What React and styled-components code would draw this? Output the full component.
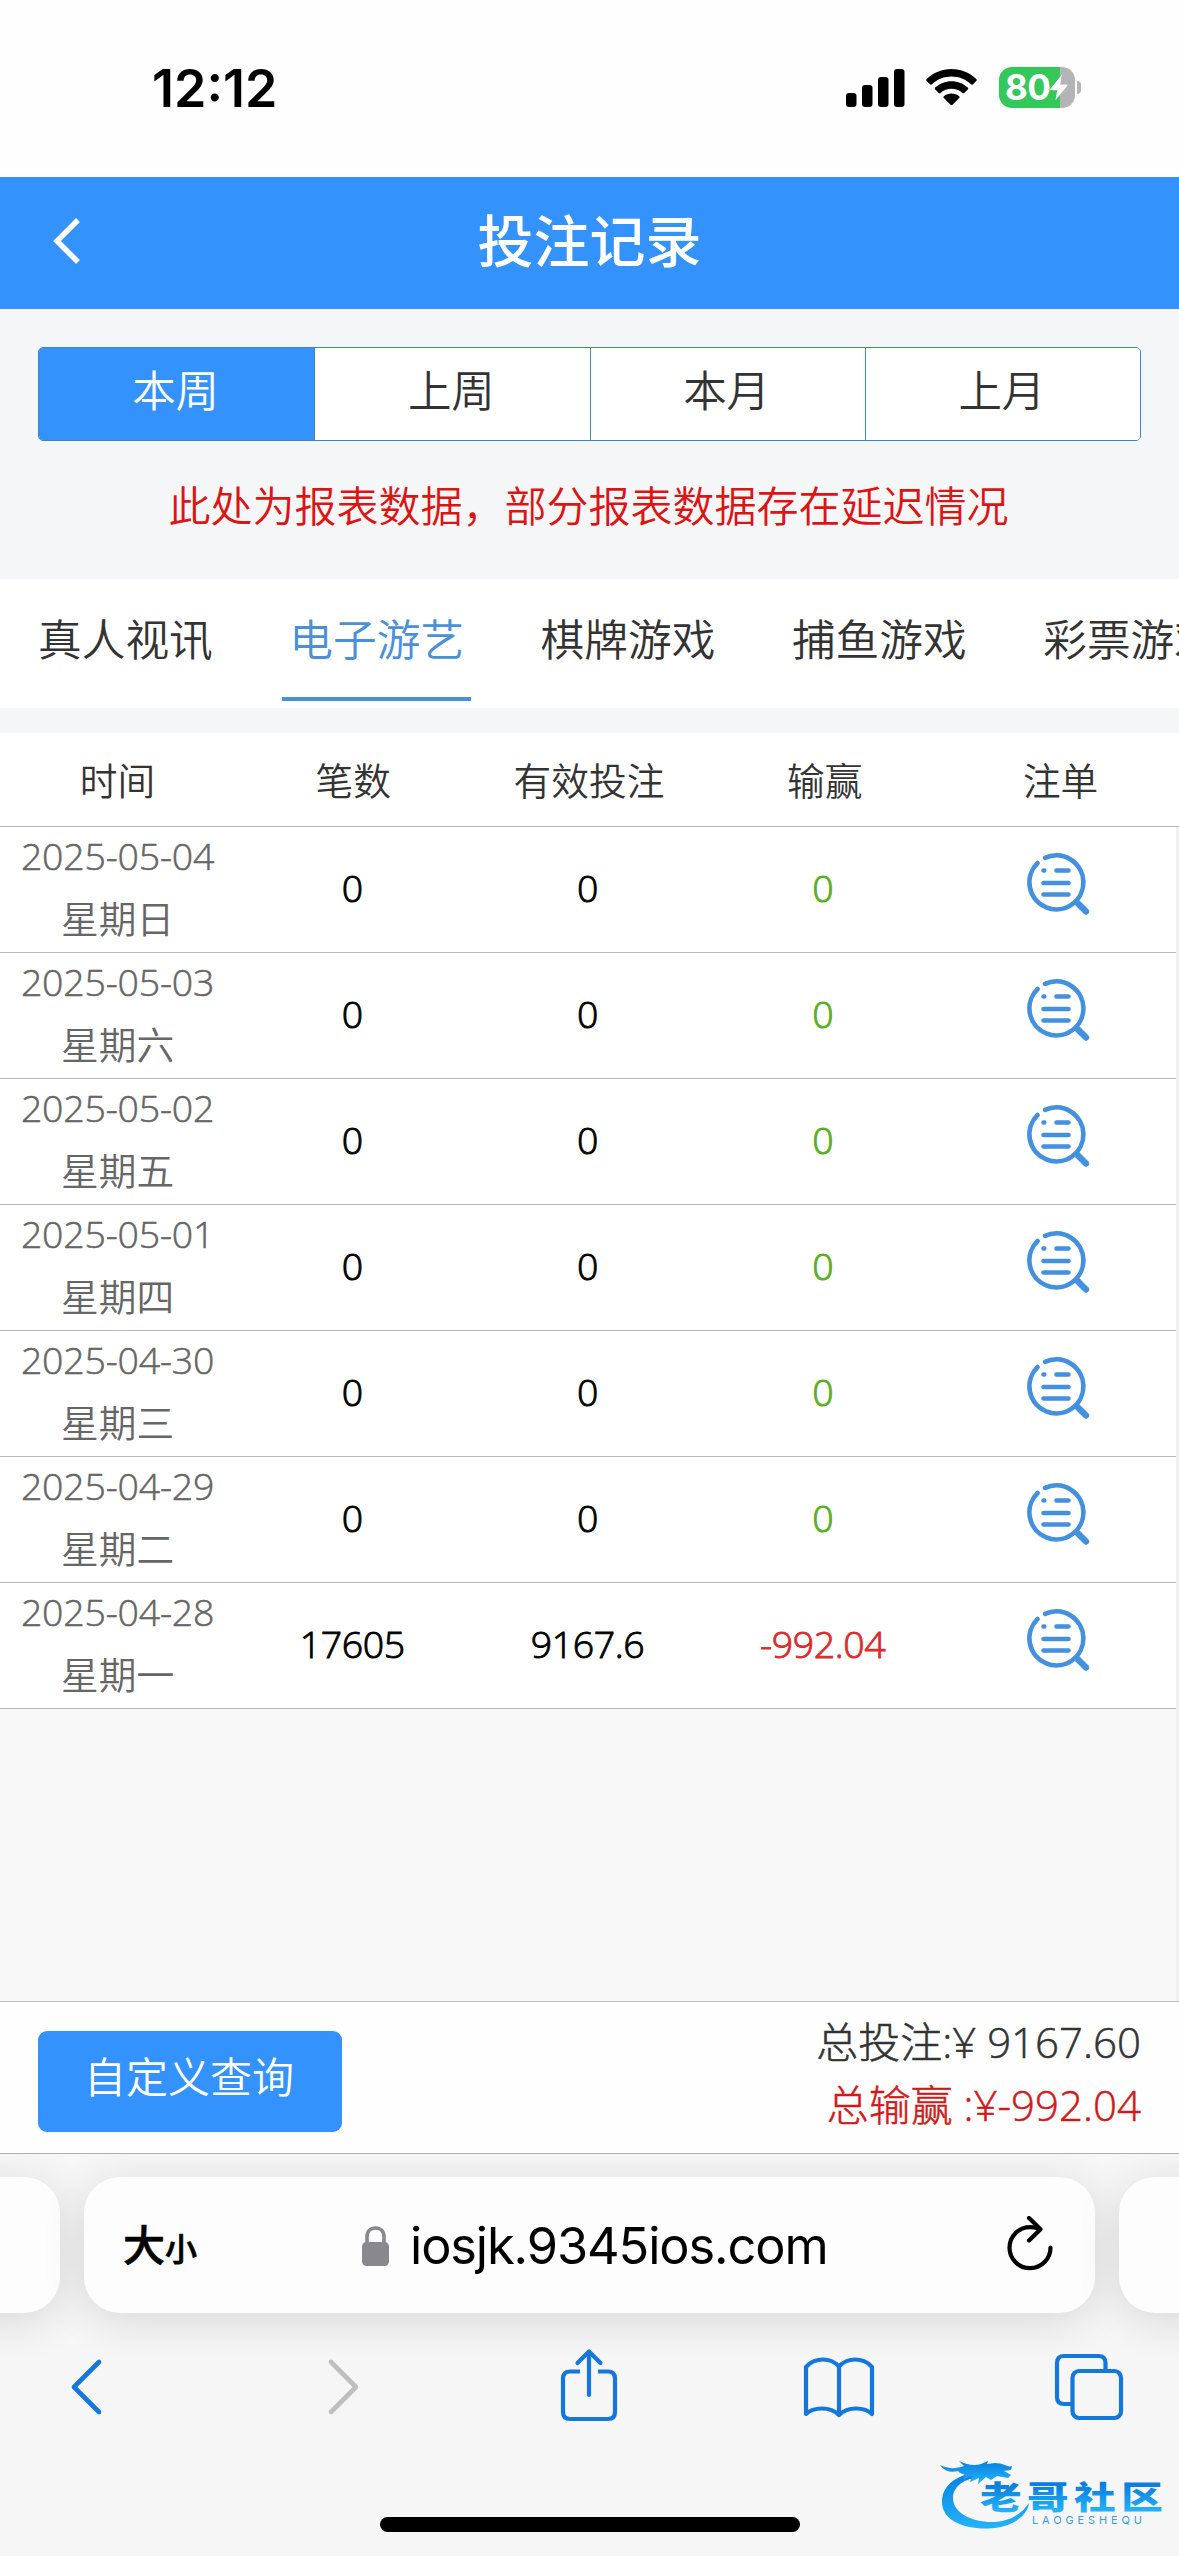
import React from 'react';
import styled, { createGlobalStyle } from 'styled-components';

const GlobalStyle = createGlobalStyle`
  * { box-sizing: border-box; }
  body { margin: 0; background: #fff; font-family: "Noto Sans CJK SC", sans-serif; }
  button { font: inherit; border: 0; padding: 0; background: none; }
  svg { display: block; flex: none; }
`;

const cjk = '"Noto Sans CJK SC", sans-serif';
const latin = '"Open Sans", "Noto Sans CJK SC", sans-serif';
const system = 'Inter, "Noto Sans CJK SC", sans-serif';

const Screen = styled.div`
  position: relative;
  width: 1179px;
  height: 2556px;
  display: flex;
  flex-direction: column;
  overflow: hidden;
  background: #f8f8f8;
`;

const StatusBar = styled.div`
  height: 177px;
  display: flex;
  align-items: flex-start;
  justify-content: space-between;
  padding: 67px 98px 0 152px;
  background: #fefefe;
`;
const Clock = styled.div`
  font: 600 52px/43px ${system};
  letter-spacing: 0;
  color: #000;
`;
const StatusIcons = styled.div`
  display: flex;
  align-items: center;
  height: 41px;
`;
const SignalBox = styled.div` margin-right: 21px; `;
const WifiBox = styled.div` margin-right: 22px; `;
const Battery = styled.div`
  display: flex;
  align-items: center;
  gap: 2px;
`;
const BatteryBody = styled.div`
  width: 76px;
  height: 41px;
  display: flex;
  align-items: center;
  padding-left: 6px;
  border-radius: 13px;
  background: linear-gradient(90deg, #34c759 0 80%, #b4b4b6 80%);
  color: #fff;
  font: 700 35px/41px ${system};
  letter-spacing: -0.5px;
`;
const BatteryTip = styled.div`
  width: 4px;
  height: 13px;
  border-radius: 0 5px 5px 0;
  background: #b4b4b6;
`;

const Header = styled.header`
  height: 132px;
  display: grid;
  grid-template-columns: 132px 1fr 132px;
  align-items: start;
  background: #3392fc;
`;
const BackButton = styled.button`
  display: flex;
  justify-content: center;
  padding-top: 40px;
`;
const Title = styled.h1`
  margin: 0;
  text-align: center;
  color: #fff;
  font: 500 56px/122px ${cjk};
`;

const Filters = styled.section`
  height: 270px;
  padding: 38px;
  background: #f4f6f8;
`;
const Segments = styled.div`
  height: 94px;
  display: grid;
  grid-template-columns: repeat(4, 1fr);
  border: 1px solid #3f86c0;
  border-radius: 5px;
  overflow: hidden;
`;
const Segment = styled.button`
  background: ${p => (p.$active ? '#3392fc' : '#fff')};
  color: ${p => (p.$active ? '#fff' : '#333')};
  border-left: ${p => (p.$first ? '0' : '1px solid #3f86c0')};
  font: 350 43.5px/82px ${cjk};
  padding: 0 2px 10px 0;
`;
const Notice = styled.p`
  margin: 32px 2px 0 0;
  text-align: center;
  color: #dc1414;
  white-space: nowrap;
  font: 350 42px/62px ${cjk};
`;

const Tabs = styled.nav`
  height: 129px;
  display: flex;
  padding-left: 31px;
  gap: 62.5px;
  background: #fff;
  overflow: hidden;
`;
const Tab = styled.button`
  flex: none;
  width: 188.8px;
  height: 122px;
  border-bottom: 4px solid ${p => (p.$active ? '#4a90d9' : 'transparent')};
  color: ${p => (p.$active ? '#4a90d9' : '#333')};
  font: 350 43.7px/116px ${cjk};
  white-space: nowrap;
  padding-bottom: 2px;
`;

const TableHead = styled.div`
  height: 119px;
  border-top: 25px solid #f4f6f8;
  border-bottom: 1px solid #b8b8b8;
  background: #fff;
  display: grid;
  grid-template-columns: repeat(5, 1fr);
`;
const HeadCell = styled.div`
  text-align: center;
  color: #333;
  font: 350 37.7px/92px ${cjk};
  padding-right: 1px;
`;
const TableBody = styled.div`
  height: 1174px;
  border-right: 3px solid #f0f0f0;
  background: #f8f8f8;
`;
const Row = styled.div`
  height: 126px;
  display: grid;
  grid-template-columns: repeat(5, 1fr);
  border-bottom: 1px solid #b8b8b8;
  background: #fff;
`;
const DateCell = styled.div`
  display: flex;
  flex-direction: column;
  align-items: center;
  color: #666;
`;
const DateText = styled.div`
  font: 300 37.5px/58px ${latin};
  -webkit-text-stroke: 0.5px currentColor;
  letter-spacing: -0.2px;
  white-space: nowrap;
`;
const Weekday = styled.div`
  font: 350 37.7px/64px ${cjk};
`;
const tones = { plain: '#000', zero: '#5aae20', loss: '#da2c2c' };
const ValueCell = styled.div`
  text-align: center;
  color: ${p => tones[p.$tone]};
  font: 300 37.5px/121px ${latin};
  -webkit-text-stroke: 0.9px currentColor;
  letter-spacing: -0.4px;
  padding-right: 1px;
`;
const IconCell = styled.button`
  display: flex;
  justify-content: center;
  padding: 24px 1px 0 0;
`;

const Summary = styled.footer`
  height: 153px;
  display: flex;
  justify-content: space-between;
  padding: 0 38px;
  border-top: 1px solid #bdbdbd;
  border-bottom: 1px solid #b0b0b0;
  background: #fefefe;
`;
const QueryButton = styled.button`
  width: 304px;
  height: 101px;
  margin-top: 29px;
  border-radius: 9px;
  background: #3392fc;
  color: #fff;
  font: 350 42px/88px ${cjk};
  padding: 0 2px 13px 0;
`;
const Totals = styled.div`
  padding-top: 8px;
  text-align: right;
`;
const TotalLine = styled.div`
  color: ${p => (p.$loss ? '#d01a1a' : '#333')};
  font: 300 42px/63px ${latin};
  -webkit-text-stroke: 0.5px currentColor;
  white-space: pre;
`;

const Browser = styled.div`
  flex: 1;
  display: flex;
  flex-direction: column;
  background: #f6f6f6;
  overflow: hidden;
`;
const Cards = styled.div`
  display: flex;
  gap: 24px;
  margin-left: -60px;
  padding-top: 23px;
`;
const Card = styled.div`
  flex: none;
  width: ${p => (p.$main ? '1011px' : '120px')};
  height: 136px;
  border-radius: 36px;
  background: #fdfdfd;
  box-shadow: 0 8px 44px rgba(0, 0, 0, 0.12);
  display: flex;
  align-items: center;
`;
const TextSize = styled.div`
  width: 277px;
  padding-left: 39px;
  font: 500 42px/60px ${cjk};
  -webkit-text-stroke: 0.7px #000;
  display: flex;
  align-items: baseline;
`;
const SmallGlyph = styled.span` font-size: 32px; `;
const Address = styled.div`
  display: flex;
  align-items: center;
  gap: 20px;
  width: 646px;
  padding-top: 2px;
  font: 400 50.5px/60px ${system};
  letter-spacing: -1.100px;
  color: #000;
`;
const ReloadButton = styled.button` padding-bottom: 3px; `;

const Toolbar = styled.div`
  height: 74px;
  margin-top: 35px;
  display: grid;
  grid-template-columns: 172px 343px 147px 354px 145px;
  align-items: center;
  justify-items: center;
`;
const ToolButton = styled.button`
  display: flex;
  padding-top: ${p => p.$drop || 0}px;
  color: ${p => (p.$muted ? '#bfbfbf' : '#1477dd')};
`;
const HomeIndicator = styled.div`
  width: 420px;
  height: 15px;
  margin: 95px auto 0;
  border-radius: 8px;
  background: #000;
`;
const Watermark = styled.div`
  position: absolute;
  left: 935px;
  top: 2455px;
`;

const Signal = () => (
  <svg width="59" height="38" viewBox="0 0 59 38">
    <rect x="0" y="24" width="10.5" height="14" rx="3" />
    <rect x="16" y="16" width="10.5" height="22" rx="3" />
    <rect x="32" y="8" width="10.5" height="30" rx="3" />
    <rect x="48" y="0" width="10.5" height="38" rx="3" />
  </svg>
);
const Wifi = () => (
  <svg width="51" height="37" viewBox="0 0 51 37">
    <path d="M25.5 0C35 0 43.800 3.700 50.300 10.100Q51.100 11 50.300 11.900L46.800 15.400Q45.900 16.100 45 15.300C39.700 10.200 32.800 7.500 25.500 7.500S11.300 10.200 6 15.300Q5.100 16.100 4.200 15.400L.7 11.900Q-.1 11 .7 10.100C7.200 3.700 16 0 25.500 0Z" />
    <path d="M25.500 12.300C31.700 12.300 37.400 14.600 41.800 18.600Q42.700 19.500 41.800 20.400L38.200 23.900Q37.400 24.700 36.400 23.900C33.400 21.300 29.600 19.800 25.500 19.800S17.600 21.300 14.600 23.900Q13.600 24.700 12.800 23.900L9.200 20.400Q8.300 19.500 9.200 18.600C13.600 14.600 19.300 12.300 25.500 12.300Z" />
    <path d="M25.500 24.600C28.400 24.600 31 25.600 33.200 27.200Q34.100 28.100 33.200 29L26.500 35.800Q25.500 36.700 24.500 35.800L17.800 29Q16.900 28.100 17.800 27.200C20 25.600 22.600 24.600 25.500 24.600Z" />
  </svg>
);
const Bolt = () => (
  <svg width="18" height="27" viewBox="0 0 19 27">
    <path d="M12.500 0 0 15.300Q-.3 16.300 1 16.300H7.600L5.800 27 18.500 11.400Q18.800 10.400 17.500 10.400H10.700Z" fill="#fff" />
  </svg>
);
const ChevronWhite = () => (
  <svg width="29" height="48" viewBox="0 0 29 48" fill="none" stroke="#fff" strokeWidth="5.500">
    <path d="M26 3 5 24 26 45" />
  </svg>
);
const RecordIcon = () => (
  <svg width="66" height="66" viewBox="0 0 66 66" fill="none" stroke="#4390e0" strokeWidth="4.600" strokeLinecap="round">
    <path d="M20 6.900A27 27 0 1 1 12.600 12" />
    <path d="M18.500 19.500H19.300M31.500 19.500H43.500M18.500 32H43.500M18.500 43.500H43.500" />
    <path d="M52 51.500 61 60.500" strokeWidth="6.400" />
  </svg>
);
const Lock = () => (
  <svg width="29" height="40" viewBox="0 0 29 40">
    <path d="M6 18V11C6 5.300 9.500 2 14.500 2S23 5.300 23 11V18" fill="none" stroke="#89888d" strokeWidth="3.600" />
    <rect x="1" y="16" width="27" height="24" rx="4.500" fill="#89888d" />
  </svg>
);
const Reload = () => (
  <svg width="46" height="56" viewBox="0 0 46 56" fill="none" stroke="#000" strokeWidth="4.200" strokeLinecap="round" strokeLinejoin="round">
    <path d="M31 12.300C28.500 11.600 26 11.200 23 11.200A20.500 20.500 0 1 0 43.500 31.500" />
    <path d="M22 2 33.500 13.200 22 24.400" />
  </svg>
);
const Chevron = ({ forward }) => (
  <svg width="34" height="58" viewBox="0 0 34 58" fill="none" stroke="currentColor" strokeWidth="4.600" strokeLinecap="round" strokeLinejoin="round">
    <path d={forward ? 'M4 4 29 29 4 54' : 'M30 4 5 29 30 54'} />
  </svg>
);
const Share = () => (
  <svg width="58" height="74" viewBox="0 0 58 74" fill="none" stroke="currentColor" strokeWidth="4.200" strokeLinecap="round" strokeLinejoin="round">
    <path d="M20 23.500H10Q3 23.500 3 30.500V64Q3 71 10 71H48Q55 71 55 64V30.500Q55 23.500 48 23.500H38" strokeLinecap="butt" />
    <path d="M29 47V3.500M17.500 15 29 3.500 40.500 15" />
  </svg>
);
const Book = () => (
  <svg width="72" height="62" viewBox="0 0 72 62" fill="none" stroke="currentColor" strokeWidth="4.200" strokeLinejoin="round">
    <path d="M36 10.500C31 5 26 3.500 20 3.500S6.500 6 3 11V58C7 54 13 52.500 19 52.500S31.500 54.500 36 59C40.500 54.500 47 52.500 53 52.500S65 54 69 58V11C65.500 6 58 3.500 52 3.500S41 5 36 10.500ZM36 10.500V59" />
  </svg>
);
const Pages = () => (
  <svg width="70" height="68" viewBox="0 0 70 68" fill="none" stroke="currentColor" strokeWidth="4.200">
    <rect x="18.500" y="18" width="48.500" height="47" rx="6.500" />
    <path d="M51.500 18V10Q51.500 3 44.500 3H10Q3 3 3 10V44Q3 51 10 51H18.500" />
  </svg>
);
const LogoMark = () => (
  <svg width="232" height="84" viewBox="0 0 232 84">
    <defs>
      <linearGradient id="ring" x1="0" y1="0" x2="0" y2="1">
        <stop offset="0" stopColor="#0b7fe0" />
        <stop offset="1" stopColor="#22b4fa" />
      </linearGradient>
      <linearGradient id="word" x1="0" y1="0" x2="0" y2="1">
        <stop offset="0.300" stopColor="#0b7fe0" />
        <stop offset="0.850" stopColor="#22b4fa" />
      </linearGradient>
    </defs>
    <g fill="url(#ring)">
      <path d="M38 18C16 22 7 34 7 47C7 64 26 74 53 73.500C74 73 92 63 94 48C85 61 72 67 57 67C35 67 18 57 18 43C18 33 27 24 42 23Z" />
      <path d="M5 10C14 14 20 14 29 11L24 6C32 10 40 11 46 9L53 6 52 9 60 8C69 8 73 13 77 11L76 15 69 16 76 20 73 23 62 21 56 25 51 22 43 29 44 23 35 27 37 21 28 24C34 18 25 20 23 16C15 18 9 16 5 10Z" />
    </g>
    <g fill="url(#word)" fontFamily="'Noto Sans CJK SC', sans-serif" fontWeight="900">
      <text transform="translate(45 54) scale(1.300 1)" fontSize="32" letterSpacing="4.200">老哥社区</text>
    </g>
    <text x="97" y="68.500" fill="#3b9ce0" fontFamily="Inter, sans-serif" fontSize="11" textLength="110">LAOGESHEQU</text>
  </svg>
);

const periods = ['本周', '上周', '本月', '上月'];
const games = ['真人视讯', '电子游艺', '棋牌游戏', '捕鱼游戏', '彩票游戏'];
const columns = ['时间', '笔数', '有效投注', '输赢', '注单'];
const records = [
  { date: '2025-05-04', day: '星期日', count: '0', stake: '0', result: '0' },
  { date: '2025-05-03', day: '星期六', count: '0', stake: '0', result: '0' },
  { date: '2025-05-02', day: '星期五', count: '0', stake: '0', result: '0' },
  { date: '2025-05-01', day: '星期四', count: '0', stake: '0', result: '0' },
  { date: '2025-04-30', day: '星期三', count: '0', stake: '0', result: '0' },
  { date: '2025-04-29', day: '星期二', count: '0', stake: '0', result: '0' },
  { date: '2025-04-28', day: '星期一', count: '17605', stake: '9167.6', result: '-992.04' },
];

export default function App() {
  return (
    <Screen>
      <GlobalStyle />
      <StatusBar>
        <Clock>12:12</Clock>
        <StatusIcons>
          <SignalBox><Signal /></SignalBox>
          <WifiBox><Wifi /></WifiBox>
          <Battery>
            <BatteryBody>80<Bolt /></BatteryBody>
            <BatteryTip />
          </Battery>
        </StatusIcons>
      </StatusBar>
      <Header>
        <BackButton><ChevronWhite /></BackButton>
        <Title>投注记录</Title>
      </Header>
      <Filters>
        <Segments>
          {periods.map((p, i) => (
            <Segment key={p} $active={i === 0} $first={i === 0}>{p}</Segment>
          ))}
        </Segments>
        <Notice>此处为报表数据，部分报表数据存在延迟情况</Notice>
      </Filters>
      <Tabs>
        {games.map((g, i) => <Tab key={g} $active={i === 1}>{g}</Tab>)}
      </Tabs>
      <TableHead>
        {columns.map(c => <HeadCell key={c}>{c}</HeadCell>)}
      </TableHead>
      <TableBody>
        {records.map(r => (
          <Row key={r.date}>
            <DateCell>
              <DateText>{r.date}</DateText>
              <Weekday>{r.day}</Weekday>
            </DateCell>
            <ValueCell $tone="plain">{r.count}</ValueCell>
            <ValueCell $tone="plain">{r.stake}</ValueCell>
            <ValueCell $tone={r.result.startsWith('-') ? 'loss' : 'zero'}>{r.result}</ValueCell>
            <IconCell><RecordIcon /></IconCell>
          </Row>
        ))}
      </TableBody>
      <Summary>
        <QueryButton>自定义查询</QueryButton>
        <Totals>
          <TotalLine>总投注:¥ 9167.60</TotalLine>
          <TotalLine $loss>总输赢 :¥-992.04</TotalLine>
        </Totals>
      </Summary>
      <Browser>
        <Cards>
          <Card />
          <Card $main>
            <TextSize>大<SmallGlyph>小</SmallGlyph></TextSize>
            <Address><Lock />iosjk.9345ios.com</Address>
            <ReloadButton><Reload /></ReloadButton>
          </Card>
          <Card />
        </Cards>
        <Toolbar>
          <ToolButton $drop={4}><Chevron /></ToolButton>
          <ToolButton $muted $drop={4}><Chevron forward /></ToolButton>
          <ToolButton><Share /></ToolButton>
          <ToolButton $drop={4}><Book /></ToolButton>
          <ToolButton $drop={3}><Pages /></ToolButton>
        </Toolbar>
        <HomeIndicator />
      </Browser>
      <Watermark><LogoMark /></Watermark>
    </Screen>
  );
}
